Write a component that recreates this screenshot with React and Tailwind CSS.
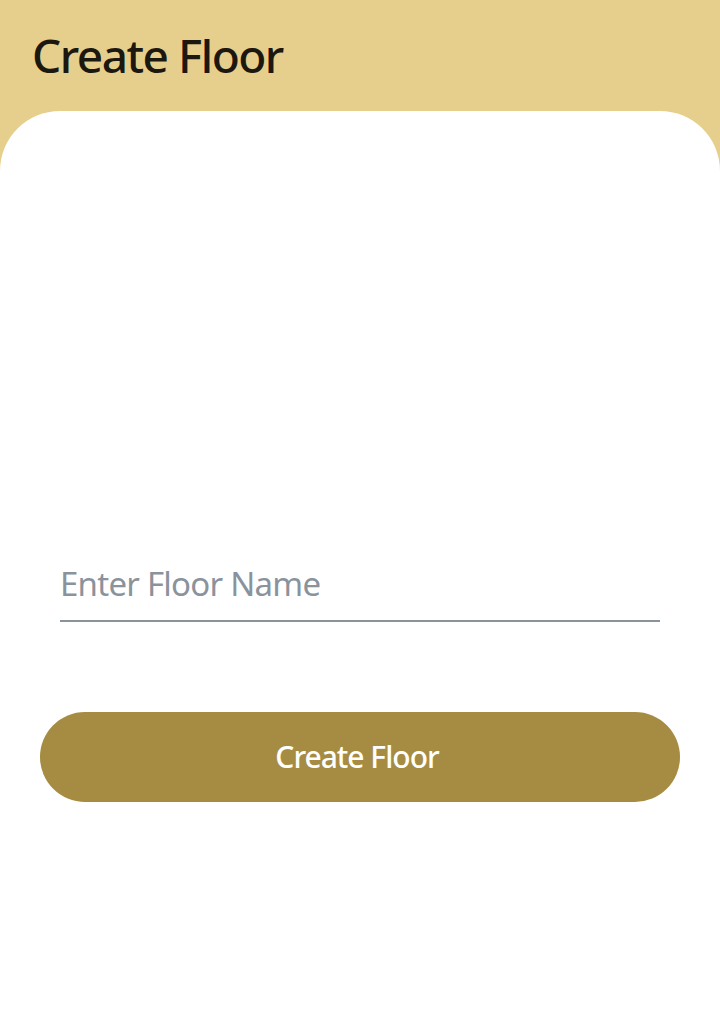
export default function App() {
  return (
    <div className="w-[720px] h-[1034px] bg-[#e6cf8c] flex flex-col overflow-hidden" style={{ fontFamily: '"Noto Sans", sans-serif' }}>
      <div className="h-[111px] px-[32px] flex items-center shrink-0">
        <h1 className="text-[46px] font-medium text-[#1c1810] tracking-[-1.5px] leading-none -mt-[2px]">Create Floor</h1>
      </div>
      <div className="flex-1 bg-white rounded-t-[60px] flex flex-col">
        <div className="h-[441px]" />
        <div className="px-[60px]">
          <div className="w-full h-[70px] border-b-2 border-[#8a939c] flex items-center text-[33px] tracking-[-0.75px] text-[#8a939c] pb-[4px]">
            Enter Floor Name
          </div>
        </div>
        <div className="px-[40px] mt-[90px]">
          <div className="w-full h-[90px] rounded-full bg-[#a68c42] text-white text-[30px] tracking-[-1px] font-medium flex items-center justify-center pb-[2px] pr-[6px]">
            Create Floor
          </div>
        </div>
      </div>
    </div>
  );
}
